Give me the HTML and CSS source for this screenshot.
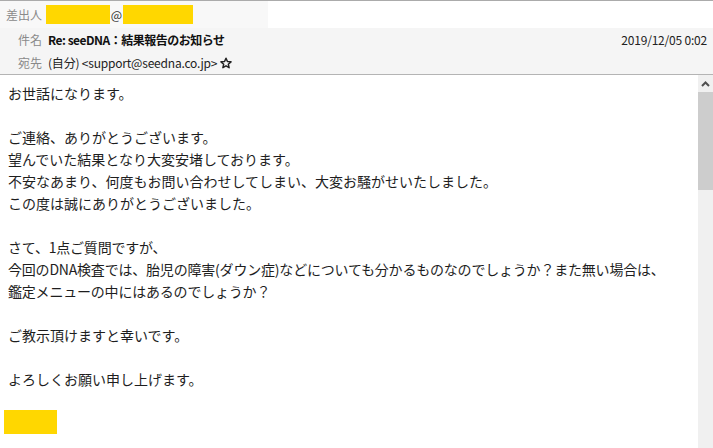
FILE: index.html
```html
<!DOCTYPE html>
<html lang="ja">
<head>
<meta charset="utf-8">
<link rel="stylesheet" href="styles.css">
</head>
<body>
<div class="mail">
  <div class="header">
    <div class="from-row">
      <div class="from-cell">
        <span class="label">差出人</span>
        <span class="mask mask-a"></span>
        <span class="at">@</span>
        <span class="mask mask-b"></span>
      </div>
      <div class="from-rest"></div>
    </div>
    <div class="row subject-row">
      <span class="label">件名</span>
      <span class="subject">Re: seeDNA：結果報告のお知らせ</span>
      <span class="date">2019/12/05 0:02</span>
    </div>
    <div class="row to-row">
      <span class="label">宛先</span>
      <span class="to">(自分) &lt;support@seedna.co.jp&gt;</span>
      <svg class="star" width="12" height="12" viewBox="0 0 24 24"><path d="M12 2.5l2.9 6.6 7.1.6-5.4 4.7 1.6 7-6.2-3.7-6.2 3.7 1.6-7L2 9.7l7.1-.6z" fill="none" stroke="#222" stroke-width="3" stroke-linejoin="round"/></svg>
    </div>
  </div>
  <div class="body">
    <div class="content">
      <div class="line">お世話になります。</div>
      <div class="line"></div>
      <div class="line">ご連絡、ありがとうございます。</div>
      <div class="line">望んでいた結果となり大変安堵しております。</div>
      <div class="line">不安なあまり、何度もお問い合わせしてしまい、大変お騒がせいたしました。</div>
      <div class="line">この度は誠にありがとうございました。</div>
      <div class="line"></div>
      <div class="line narrow">さて、1点ご質問ですが、</div>
      <div class="line narrow">今回のDNA検査では、胎児の障害(ダウン症)などについても分かるものなのでしょうか？また無い場合は、</div>
      <div class="line narrow">鑑定メニューの中にはあるのでしょうか？</div>
      <div class="line"></div>
      <div class="line">ご教示頂けますと幸いです。</div>
      <div class="line"></div>
      <div class="line">よろしくお願い申し上げます。</div>
      <div class="sign"></div>
    </div>
    <div class="scrollbar">
      <div class="arrow">
        <svg width="9" height="6" viewBox="0 0 9 6"><path d="M1 5l3.5-3.5L8 5" fill="none" stroke="#505050" stroke-width="2"/></svg>
      </div>
      <div class="thumb"></div>
      <div class="track"></div>
    </div>
  </div>
</div>
</body>
</html>
```
FILE: styles.css
```css
html, body {
  margin: 0;
  padding: 0;
  background: #fff;
}
body {
  font-family: "Noto Sans CJK JP", "Noto Sans", sans-serif;
  color: #222;
  width: 713px;
  height: 448px;
  overflow: hidden;
}
.mail {
  display: flex;
  flex-direction: column;
  height: 448px;
}
.header {
  border-top: 1px solid #ababab;
  border-bottom: 1px solid #b4b4b4;
  background: #f5f5f5;
  font-size: 12px;
}
.from-row {
  display: flex;
  height: 27px;
}
.from-cell {
  width: 268px;
  background: #f8f8f8;
  display: flex;
  align-items: center;
  padding-left: 6px;
  box-sizing: border-box;
}
.from-rest {
  flex: 1;
  background: #fff;
}
.label {
  color: #8a8a8a;
}
.from-cell .label {
  width: 40px;
}
.mask {
  display: block;
  height: 19px;
  background: #ffd700;
}
.mask-a {
  width: 64px;
}
.mask-b {
  width: 70px;
}
.at {
  width: 13px;
  text-align: center;
  color: #333;
}
.row {
  display: flex;
  align-items: center;
  height: 23px;
  padding-left: 18px;
  padding-right: 6px;
}
.row .label {
  width: 30px;
}
.subject {
  font-weight: bold;
  color: #111;
  letter-spacing: -0.5px;
}
.date {
  margin-left: auto;
  color: #222;
  letter-spacing: -0.2px;
}
.to {
  color: #222;
  letter-spacing: -0.2px;
}
.star {
  margin-left: 3px;
}
.body {
  flex: 1;
  display: flex;
  min-height: 0;
}
.content {
  flex: 1;
  padding: 7px 0 0 8px;
  font-size: 14px;
  color: #1e1e1e;
}
.line {
  height: 22px;
  line-height: 22px;
  white-space: nowrap;
}
.narrow {
  letter-spacing: -0.2px;
}
.sign {
  width: 53px;
  height: 24px;
  background: #ffd700;
  margin: 20px 0 0 -4px;
}
.scrollbar {
  width: 15px;
  display: flex;
  flex-direction: column;
  background: #f0f0f0;
}
.arrow {
  height: 17px;
  display: flex;
  align-items: center;
  justify-content: center;
}
.thumb {
  height: 98px;
  background: #cdcdcd;
}
.track {
  flex: 1;
}
```
